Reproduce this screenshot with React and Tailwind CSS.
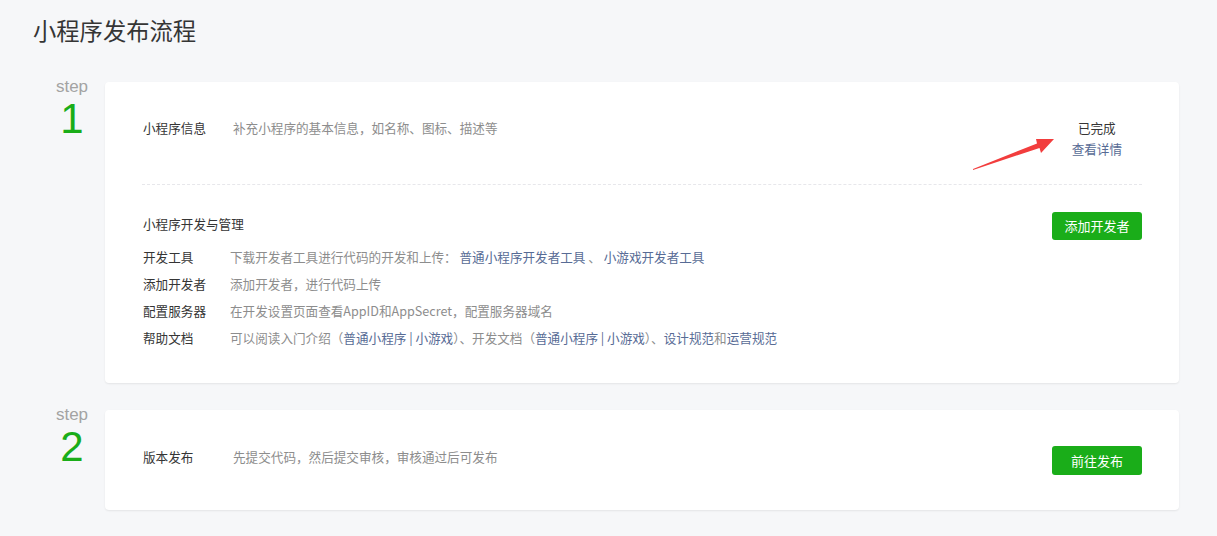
import React from "react";

const font = { fontFamily: '"Noto Sans CJK SC", "Noto Sans", sans-serif' };

function Link({ children }) {
    return <a className="text-[#576b95] cursor-pointer">{children}</a>;
}

function StepNo({ n }) {
    return (
        <div className="-mt-[4px] w-[72px] pl-[6px] shrink-0 text-center" style={{ fontFamily: '"Liberation Sans", sans-serif' }}>
            <div className="text-[17px] leading-[17px] text-[#a3a3a3]">step</div>
            <div className="text-[42px] leading-[47px] text-[#1aad19]">{n}</div>
        </div>
    );
}

const rows = [
    {
        label: "开发工具",
        desc: (
            <>
                下载开发者工具进行代码的开发和上传： <Link>普通小程序开发者工具</Link> 、 <Link>小游戏开发者工具</Link>
            </>
        ),
    },
    { label: "添加开发者", desc: "添加开发者，进行代码上传" },
    { label: "配置服务器", desc: "在开发设置页面查看AppID和AppSecret，配置服务器域名" },
    {
        label: "帮助文档",
        desc: (
            <>
                可以阅读入门介绍（<Link>普通小程序</Link> <span className="text-[#576b95]">|</span> <Link>小游戏</Link>）、开发文档（<Link>普通小程序</Link> <span className="text-[#576b95]">|</span> <Link>小游戏</Link>）、<Link>设计规范</Link>和<Link>运营规范</Link>
            </>
        ),
    },
];

export default function App() {
    return (
        <div className="min-h-screen bg-[#f6f7f9] px-[33px] pt-[15px] pb-[25px] text-[12.6px] text-[#353535]" style={font}>
            <h1 className="text-[23.3px] leading-[30px] font-normal text-[#353535]">小程序发布流程</h1>

            <div className="mt-[37px] mr-[5px] flex flex-col gap-[27px]">
                {/* step 1 */}
                <div className="flex items-start">
                    <StepNo n="1" />
                    <div className="relative flex-1 bg-white rounded-[4px] shadow-[0_1px_2px_rgba(0,0,0,0.08)] px-[37px]">
                        <div className="flex items-start pl-[1px] pt-[35px] pb-[25px] border-b border-dashed border-[#e7e7eb]">
                            <div className="w-[90px] leading-[21px] text-[#353535]">小程序信息</div>
                            <div className="flex-1 leading-[21px] text-[#8d8d8d]">补充小程序的基本信息，如名称、图标、描述等</div>
                            <div className="mr-[20px] text-center leading-[21px]">
                                <div className="text-[#353535]">已完成</div>
                                <Link>查看详情</Link>
                            </div>
                        </div>

                        <div className="pl-[1px] pt-[27px] pb-[32px]">
                            <div className="flex items-start justify-between">
                                <div className="mt-[1px] leading-[21px]">小程序开发与管理</div>
                                <button className="h-[28px] w-[90px] rounded-[3px] bg-[#1aad19] text-white text-[13px]">添加开发者</button>
                            </div>
                            <div className="mt-[3px]">
                                {rows.map((r) => (
                                    <div key={r.label} className="flex leading-[27px]">
                                        <div className="w-[87px] shrink-0 text-[#353535]">{r.label}</div>
                                        <div className="text-[#8d8d8d] whitespace-nowrap">{r.desc}</div>
                                    </div>
                                ))}
                            </div>
                        </div>

                        {/* red annotation arrow */}
                        <svg className="absolute left-[863px] top-[51px]" width="90" height="40" viewBox="0 0 90 40">
                            <polygon points="5,36 69,10.5 68,6 86,6 73,20 71.5,15 5,37" fill="#f23d3d" />
                        </svg>
                    </div>
                </div>

                {/* step 2 */}
                <div className="flex items-start">
                    <StepNo n="2" />
                    <div className="flex-1 flex items-start bg-white rounded-[4px] shadow-[0_1px_2px_rgba(0,0,0,0.08)] pl-[38px] pr-[37px] pt-[36px] pb-[35px]">
                        <div className="w-[90px] leading-[21px] text-[#353535]">版本发布</div>
                        <div className="flex-1 leading-[21px] text-[#8d8d8d]">先提交代码，然后提交审核，审核通过后可发布</div>
                        <button className="h-[29px] w-[90px] rounded-[3px] bg-[#1aad19] text-white text-[13px]">前往发布</button>
                    </div>
                </div>
            </div>
        </div>
    );
}
